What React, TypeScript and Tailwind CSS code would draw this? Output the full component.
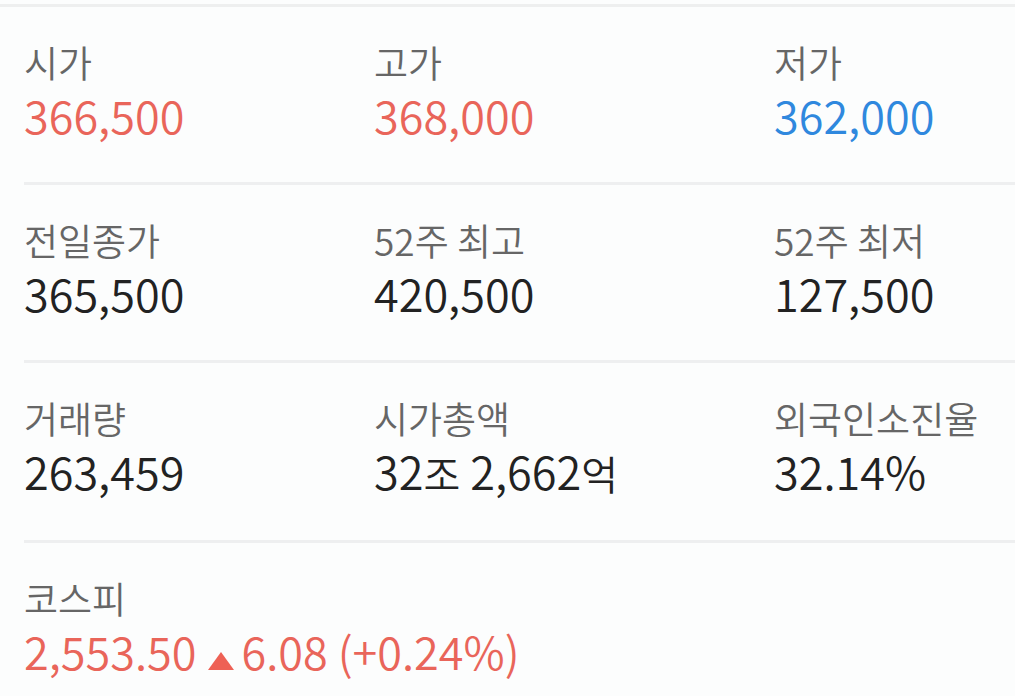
const rows = [
  [
    { label: '시가', value: '366,500', tone: 'up' },
    { label: '고가', value: '368,000', tone: 'up' },
    { label: '저가', value: '362,000', tone: 'down' },
  ],
  [
    { label: '전일종가', value: '365,500', tone: 'plain' },
    { label: '52주 최고', value: '420,500', tone: 'plain' },
    { label: '52주 최저', value: '127,500', tone: 'plain' },
  ],
  [
    { label: '거래량', value: '263,459', tone: 'plain' },
    { label: '시가총액', value: '32조 2,662억', tone: 'plain' },
    { label: '외국인소진율', value: '32.14%', tone: 'plain' },
  ],
]

const toneClass: Record<string, string> = {
  up: 'text-[#e9655a]',
  down: 'text-[#2f88de]',
  plain: 'text-[#222222]',
}

// 조/억 units are drawn a bit smaller than the digits
function Value({ text }: { text: string }) {
  const parts = text.split(/([조억])/)
  return (
    <>
      {parts.map((p, i) =>
        p === '조' || p === '억' ? (
          <span key={i} className="text-[40px]">{p}</span>
        ) : (
          <span key={i}>{p}</span>
        )
      )}
    </>
  )
}

export default function App() {
  return (
    <div
      className="min-h-[696px] bg-[#fcfdfd] pt-1 font-[350]"
      style={{ fontFamily: '"Noto Sans CJK KR", "Noto Sans", sans-serif' }}
    >
      <div className="h-[3px] bg-[#eeefef]" />

      {rows.map((row, i) => (
        <div key={i} className="pl-6">
          <div className="grid grid-cols-[350px_400px_1fr] pt-[32px] pb-[39px]">
            {row.map((cell) => (
              <div key={cell.label}>
                <div className="text-[37px] leading-[46px] text-[#666666]">{cell.label}</div>
                <div className={`mt-[2px] text-[45px] leading-[56px] ${toneClass[cell.tone]}`}>
                  <Value text={cell.value} />
                </div>
              </div>
            ))}
          </div>
          <div className="h-[3px] bg-[#eeeff0]" />
        </div>
      ))}

      {/* 코스피 */}
      <div className="pl-6 pt-[32px]">
        <div className="text-[37px] leading-[46px] text-[#666666]">코스피</div>
        <div className="mt-[2px] flex items-baseline text-[45px] leading-[56px] text-[#e9655a]">
          <span>2,553.50</span>
          <svg width="26" height="18" viewBox="0 0 26 18" className="ml-[12px] mr-[7px]">
            <polygon points="13,0 26,18 0,18" fill="#ee6155" />
          </svg>
          <span>6.08 (+0.24%)</span>
        </div>
      </div>
    </div>
  )
}
